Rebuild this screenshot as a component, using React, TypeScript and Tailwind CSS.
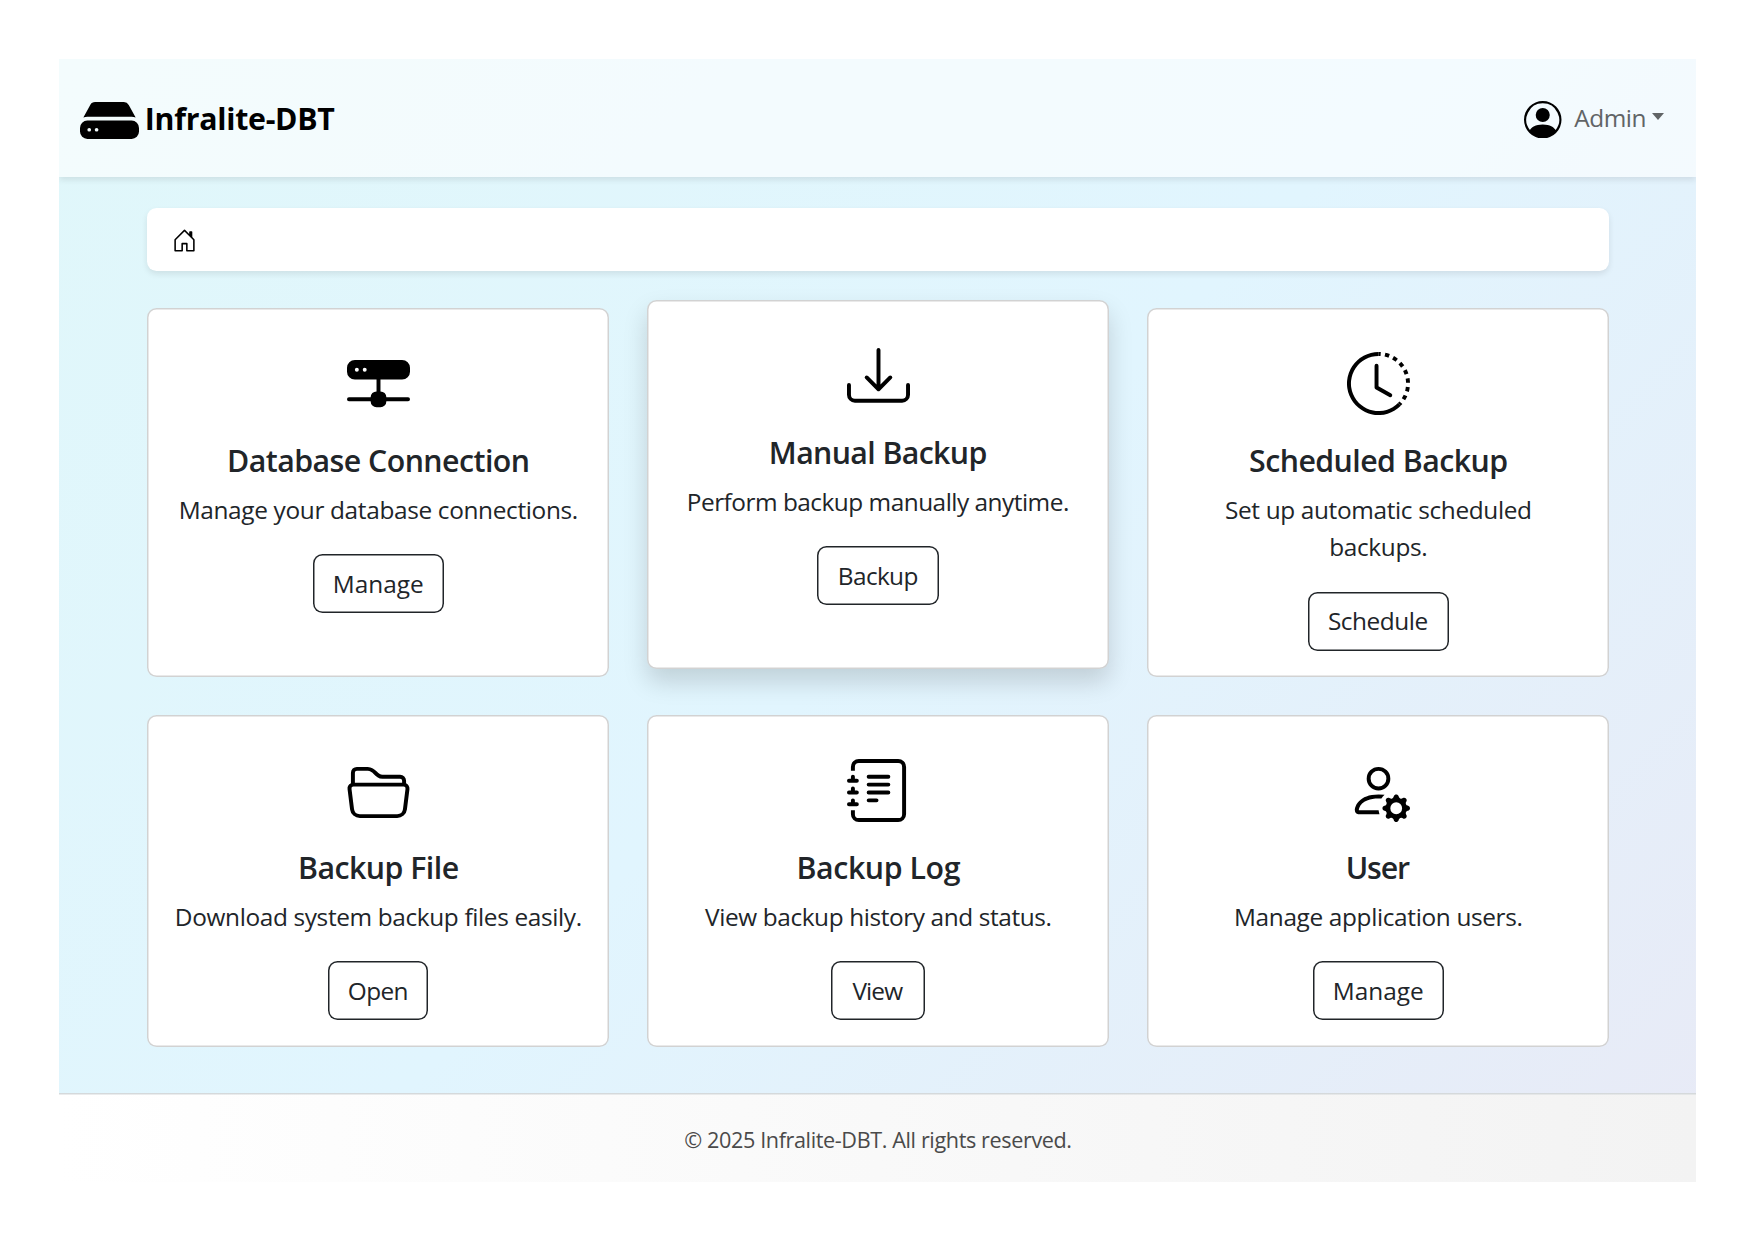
import type { IconType } from "react-icons";
import {
  BsClockHistory,
  BsDownload,
  BsFolder2Open,
  BsHddFill,
  BsHddNetworkFill,
  BsHouseDoor,
  BsJournalText,
  BsPersonCircle,
  BsPersonGear,
} from "react-icons/bs";

type Feature = {
  Icon: IconType;
  title: string;
  titleClass: string;
  lines: string[];
  textClass: string;
  action: string;
  actionClass: string;
  raised?: boolean;
};

const features: Feature[] = [
  {
    Icon: BsHddNetworkFill,
    title: "Database Connection",
    titleClass: "tracking-[-0.54px]",
    lines: ["Manage your database connections."],
    textClass: "tracking-[-0.34px]",
    action: "Manage",
    actionClass: "w-[131px]",
  },
  {
    Icon: BsDownload,
    title: "Manual Backup",
    titleClass: "tracking-[-0.62px] pr-px",
    lines: ["Perform backup manually anytime."],
    textClass: "tracking-[-0.5px] pr-px",
    action: "Backup",
    actionClass: "w-[122px] tracking-[-0.64px] pr-px",
    raised: true,
  },
  {
    Icon: BsClockHistory,
    title: "Scheduled Backup",
    titleClass: "tracking-[-0.55px]",
    lines: ["Set up automatic scheduled", "backups."],
    textClass: "tracking-[-0.35px]",
    action: "Schedule",
    actionClass: "w-[141px] tracking-[-0.46px] pr-px",
  },
  {
    Icon: BsFolder2Open,
    title: "Backup File",
    titleClass: "tracking-[-0.53px]",
    lines: ["Download system backup files easily."],
    textClass: "tracking-[-0.36px]",
    action: "Open",
    actionClass: "w-[100px] tracking-[-0.66px] pr-px",
  },
  {
    Icon: BsJournalText,
    title: "Backup Log",
    titleClass: "tracking-[-0.42px]",
    lines: ["View backup history and status."],
    textClass: "tracking-[-0.4px]",
    action: "View",
    actionClass: "w-[94px] tracking-[-0.9px] pr-0.5",
  },
  {
    Icon: BsPersonGear,
    title: "User",
    titleClass: "tracking-[-1.2px] pr-0.5",
    lines: ["Manage application users."],
    textClass: "tracking-[-0.35px]",
    action: "Manage",
    actionClass: "w-[131px]",
  },
];

function FeatureCard({ feature }: { feature: Feature }) {
  const { Icon, title, titleClass, lines, textClass, action, actionClass, raised } = feature;
  return (
    <article
      className={`flex flex-col items-center rounded-[9.5px] bg-white pt-[43.5px] pb-[26.6px] text-center ${
        raised
          ? "-translate-y-2 shadow-[inset_0_0_0_1.5px_rgba(0,0,0,0.175),0_12.5px_25px_rgba(0,0,0,0.15)]"
          : "shadow-[inset_0_0_0_1.5px_rgba(0,0,0,0.175)]"
      }`}
    >
      <Icon className="size-[63px] text-black" />
      <h5 className={`mt-[27.3px] text-[30.3px] leading-[37.7px] font-semibold ${titleClass}`}>{title}</h5>
      <p className={`mt-[11.4px] text-[24.4px] leading-[37.3px] ${textClass}`}>
        {lines.map((line) => (
          <span key={line} className="block whitespace-nowrap">
            {line}
          </span>
        ))}
      </p>
      <button
        className={`mt-[25.9px] h-[59px] rounded-[9.5px] pt-px text-[24.4px] shadow-[inset_0_0_0_1.5px_#212529] ${actionClass}`}
      >
        {action}
      </button>
    </article>
  );
}

export default function App() {
  return (
    <div className="h-[1240px] w-[1754px] bg-white pt-[59px] pl-[59.3px] font-['Open_Sans','Noto_Sans',sans-serif] text-[#212529]">
      <div className="flex h-[1123px] w-[1636.3px] flex-col overflow-hidden bg-[linear-gradient(135deg,#e0f7fa_0%,#e1f5fe_50%,#e8eaf6_100%)]">
        <header className="flex h-[117.6px] shrink-0 items-center justify-between bg-white/60 pr-[31.5px] pl-[20.5px] shadow-[0_3px_6px_rgba(0,0,0,0.09)]">
          <div className="flex items-center pt-[5px] text-black">
            <BsHddFill className="size-[59px]" />
            <span className="-mt-[2px] ml-[6px] text-[30.3px] leading-none font-bold tracking-[-0.27px]">Infralite-DBT</span>
          </div>
          <div className="flex items-center">
            <BsPersonCircle className="mt-[3px] size-[37.5px] text-black" />
            <span className="ml-[12.5px] text-[24.4px] leading-none tracking-[-0.45px] text-[#616466]">Admin</span>
            <span className="-mt-0.5 ml-[6px] border-x-[6.5px] border-t-[7px] border-x-transparent border-t-[#616466]" />
          </div>
        </header>
        <main className="ml-[88px] w-[1462px] grow">
          <nav className="mt-[31.5px] flex h-[62.6px] items-center rounded-[9.5px] bg-white pl-[24.5px] shadow-[0_3px_6px_rgba(0,0,0,0.09)]">
            <BsHouseDoor className="mt-[1.5px] size-[25px] text-black" />
          </nav>
          <div className="mt-[37.6px] grid grid-cols-3 gap-x-[38px] gap-y-[37.8px]">
            {features.map((feature) => (
              <FeatureCard key={feature.title} feature={feature} />
            ))}
          </div>
        </main>
        <footer className="flex h-[89px] shrink-0 items-center justify-center bg-[linear-gradient(90deg,#ffffff,#f3f3f3)] pt-[5px] pl-px text-[21.6px] tracking-[-0.38px] text-[#4a4a4a] shadow-[inset_0_1.5px_0_#d5d9db]">
          © 2025 Infralite-DBT. All rights reserved.
        </footer>
      </div>
    </div>
  );
}
